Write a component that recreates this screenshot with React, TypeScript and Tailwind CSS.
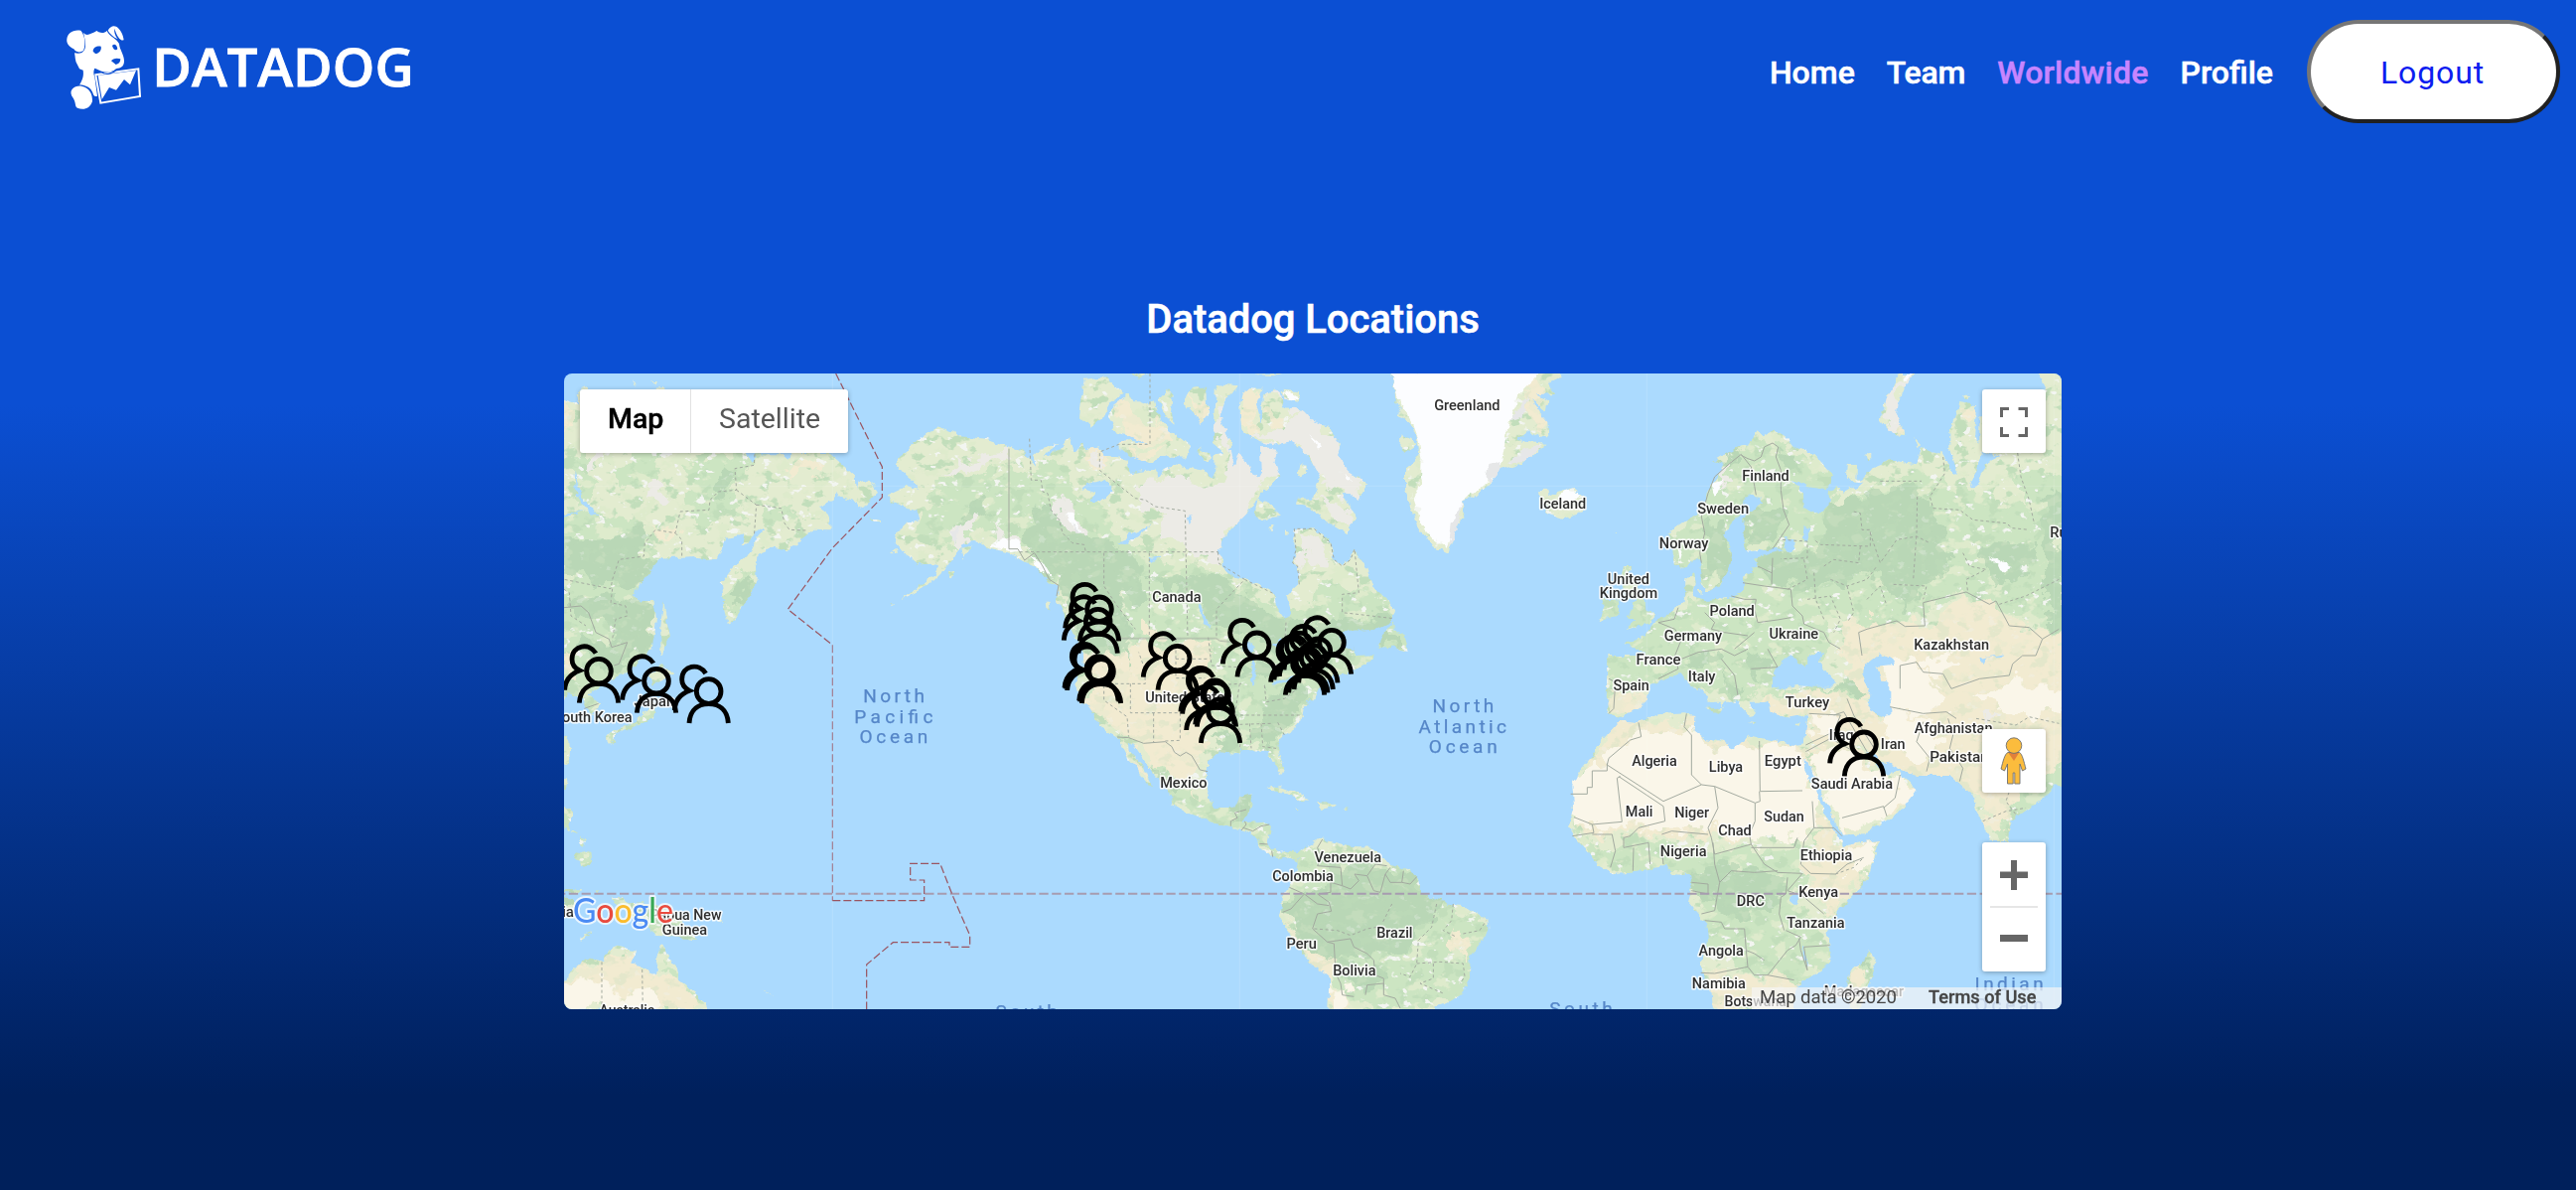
import React from 'react';

type Crop = { x: number; y: number };

const TILES: Record<string, Crop> = {
  A: { x: 560, y: 370 },
  B: { x: 880, y: 370 },
  C: { x: 1240, y: 370 },
  D: { x: 1560, y: 370 },
  E: { x: 560, y: 640 },
  F: { x: 960, y: 640 },
  G: { x: 1260, y: 680 },
  H: { x: 1560, y: 640 },
};

type Shape = [tile: string, points: string];

const poly = (p: string) => 'M' + p + 'Z';

const Tile = ({ t, children }: { t: string; children: React.ReactNode }) => (
  <g transform={`translate(${TILES[t].x} ${TILES[t].y}) scale(0.333333)`}>{children}</g>
);

const LAND: Shape[] = [
  // Siberia and north-east Asia
  ['A', '0,85 24,97 70,112 62,80 75,66 95,60 110,100 400,200 575,258 580,268 590,285 600,262 685,262 700,275 715,258 825,258 870,298 905,330 908,365 920,340 950,342 972,375 955,390 932,430 915,420 900,405 860,392 845,375 838,400 795,420 815,435 825,460 827,490 780,488 745,515 700,553 655,545 615,562 602,590 605,640 590,690 568,715 545,758 520,770 510,730 505,690 500,650 530,610 565,580 590,550 607,515 628,490 605,487 590,515 578,535 563,530 568,505 515,515 485,580 450,582 420,570 385,572 355,572 320,575 275,625 245,665 225,690 260,705 295,705 303,760 298,800 290,850 240,900 190,935 135,960 95,985 130,1010 115,1045 88,1025 80,1000 40,985 20,1010 0,1010'],
  ['A', '325,703 333,760 345,810 328,825 325,868 316,870 316,780'],
  ['A', '950,455 982,462 980,468 952,462'],
  ['A', '230,40 238,56 230,48'], ['A', '292,42 302,42 300,56'], ['A', '302,62 325,60 325,75 302,75'],
  // Japan, Philippines, New Guinea, Australia
  ['E', '315,80 355,115 330,130 290,152 285,125 300,110'],
  ['E', '290,190 302,220 298,245 270,262 240,272 205,290 178,298 175,318 165,330 148,300 165,292 200,280 240,262 258,235 280,220'],
  ['E', '24,300 40,320 42,350 38,380 20,390 20,300'],
  ['E', '24,430 38,430 28,465 20,465'], ['E', '20,520 45,520 45,560 35,590 20,578'],
  ['E', '40,590 65,590 60,600'], ['E', '75,605 90,620 82,640 68,625'],
  ['E', '100,650 103,685 82,697 72,680 48,672 55,655 80,658'],
  ['E', '20,765 80,766 62,776 20,774'], ['E', '118,776 135,765 128,778'],
  ['E', '68,912 110,895 92,908 75,920'], ['E', '20,790 50,795 70,830 20,850'],
  ['E', '170,790 205,788 215,808 260,805 330,822 380,860 428,920 370,912 300,905 280,880 240,860 200,812 175,805'],
  ['E', '495,855 505,868 490,862'], ['E', '625,1068 655,1088 640,1080'],
  ['E', '20,1055 50,1010 100,970 140,988 155,950 185,938 243,950 228,988 270,1008 300,1020 308,965 320,930 338,968 362,1000 370,1035 400,1060 430,1085 460,1130 20,1130'],
  // North America
  ['B', '65,290 78,270 105,250 110,230 150,210 195,178 240,195 255,208 340,215 405,238 440,250 470,275 490,300 480,265 500,245 560,230 525,258 510,275 570,240 590,210 605,255 615,250 630,225 636,250 680,238 695,268 770,278 775,318 850,308 862,332 880,305 905,293 990,310 1030,332 1030,262 1080,252 1090,300 1105,258 1130,295 1145,320 1200,355 1155,400 1145,420 1095,470 1055,515 1040,560 1070,625 1120,640 1165,660 1212,685 1220,730 1245,765 1260,740 1247,690 1285,655 1280,600 1265,590 1275,550 1270,487 1330,487 1380,530 1390,580 1415,600 1440,580 1450,548 1490,610 1505,660 1545,695 1572,730 1565,765 1510,792 1420,795 1405,812 1450,822 1452,870 1512,868 1500,890 1430,922 1385,930 1350,960 1330,1000 700,1000 645,890 600,800 555,705 557,662 520,640 490,600 450,585 410,560 350,545 300,522 265,540 235,580 210,615 180,645 130,675 88,697 100,685 180,630 195,600 165,595 130,590 110,572 90,560 65,530 70,500 100,470 140,462 130,430 90,420 52,405 42,385 100,357 135,370 120,345 95,325'],
  ['B', '52,555 70,552 72,560 55,562'], ['B', '225,620 245,612 235,638 226,630'], ['B', '262,545 290,540 268,578'],
  ['B', '518,708 530,712 535,735 520,725'], ['B', '52,714 62,714 60,720'],
  ['B', '635,35 700,28 755,80 712,108 690,150 655,182 618,145'],
  ['B', '770,80 778,100 800,100 830,112 848,100 862,150 895,190 925,212 958,240 940,272 885,268 832,288 785,272 735,235 765,220 830,232 760,200 718,190 730,162 708,155 722,118'],
  ['B', '862,92 888,64 905,85 900,140 905,170 880,150'],
  ['B', '950,70 968,62 1003,58 1005,110 1018,135 990,172 960,130 935,108'],
  ['B', '1035,48 1100,55 1058,110 1045,150 1080,232 1070,268 1020,225 1030,150'],
  ['B', '985,240 1027,270 1010,286 980,265'], ['B', '770,20 830,20 800,32'],
  ['C', '30,180 25,120 36,80 55,64 92,65 75,110 92,168 95,85 130,65 150,72 155,118 195,120 222,135 245,160 290,180 330,230 318,262 352,312 412,350 380,402 335,370 372,455 350,502 280,460 240,425 195,412 200,395 245,395 270,332 235,270 195,230 180,222 120,235 60,215 35,195'],
  ['C', '155,68 198,72 212,95 205,105 160,95'], ['C', '205,290 227,296 228,322 210,332 200,318'],
  ['C', '80,390 110,410 150,450 125,452 95,465 70,450'], ['C', '108,482 130,475 122,492'], ['C', '160,495 168,500 163,508'],
  ['C', '90,240 138,245 130,290 145,330 108,375 70,350 92,310'],
  ['C', '0,350 60,385 52,402 20,440 15,475 0,475'], ['C', '60,20 150,18 130,25'],
  ['C', '480,775 492,770 500,800 520,810 533,855 505,848 495,842 445,845 462,800'],
  ['F', '300,0 1150,0 1130,70 1085,175 1075,195 1060,215 1055,240 1040,275 985,310 978,340 1000,400 990,425 968,385 950,348 870,345 862,358 805,352 765,385 765,470 790,520 850,518 865,485 905,478 892,540 875,565 940,560 960,572 950,630 985,655 1015,648 1035,660 1040,690 1020,668 985,675 930,645 905,600 830,575 780,560 700,532 660,508 655,470 600,410 572,370 545,328 528,322 530,345 566,385 600,452 590,452 570,430 550,390 530,385 525,360 500,312 450,278 410,215 385,200 370,150 390,100 395,50 370,0'],
  ['F', '945,465 985,453 1040,472 1078,497 1042,496 1010,475'], ['F', '1095,502 1130,502 1152,515 1110,525'],
  ['F', '1028,524 1045,526 1035,529'], ['F', '1178,523 1195,524 1185,529'],
  // Greenland and Iceland
  ['C', '483,10 495,90 492,105 515,118 500,150 540,165 560,210 568,262 550,288 525,300 525,370 545,420 560,470 578,500 600,532 655,560 675,500 700,445 700,400 740,388 782,350 812,310 880,290 950,230 860,222 900,190 935,212 958,210 955,165 925,130 905,95 950,135 955,100 920,82 975,78 960,45 992,30 985,10'],
  ['C', '512,198 560,232 525,255 508,240'],
  ['C', '930,370 955,368 960,390 985,378 1035,362 1070,400 1060,435 1000,458 950,440 955,420 935,405'],
  ['C', '1158,495 1166,495 1162,502'],
  // Europe and Asia
  ['D', '635,190 650,205 680,188 715,210 740,240 800,262 858,325 855,345 835,370 780,360 735,342 768,378 770,420 812,445 845,415 845,370 870,360 890,380 910,368 950,350 910,345 896,330 900,290 930,298 928,335 945,342 980,300 1030,280 1110,292 1125,240 1190,262 1220,320 1235,318 1210,250 1210,190 1240,105 1290,115 1285,200 1310,262 1275,345 1268,362 1290,358 1320,290 1360,270 1300,250 1300,150 1320,140 1480,120 1500,60 1475,15 1560,15 1560,1010 175,1010 175,928 270,932 290,900 290,862 232,830 290,810 320,770 360,745 410,705 412,640 436,620 440,650 432,690 470,702 545,695 585,680 585,632 630,600 618,575 640,568 705,550 680,545 600,560 585,540 590,450 642,410 640,390 598,385 580,440 548,470 530,510 555,560 545,600 510,665 475,677 460,650 452,572 400,610 380,592 362,500 410,465 455,440 480,370 510,330 530,290 495,282 570,238 600,232'],
  ['D', '1060,18 1100,18 1072,70 1055,110 1050,140 1078,205 1035,200 1000,160 1020,90 1040,60'],
  ['D', '1098,212 1122,236 1112,240'], ['D', '955,258 978,260 960,278'], ['D', '1253,85 1272,88 1262,98'],
  ['D', '160,700 205,698 210,740 180,758 155,765 165,730'],
  ['D', '225,600 250,600 240,622 262,628 258,650 290,700 292,735 318,740 308,775 228,792 262,762 232,752 255,730 250,715 265,700 240,690 215,640'],
  ['D', '448,672 462,672 460,688'], ['D', '545,620 552,618 548,632'],
  ['H', '175,115 345,115 390,108 420,140 470,162 520,195 515,218 528,205 545,175 500,145 470,105 510,120 560,165 575,205 602,240 625,235 600,200 598,180 655,172 668,232 720,248 782,236 770,325 735,332 700,322 608,302 590,310 560,340 520,320 470,312 440,290 442,240 405,232 330,238 270,262 215,255 165,310 125,370 90,410 70,450 75,510 60,575 72,605 115,650 150,695 190,718 260,712 350,695 375,718 425,720 432,760 420,805 475,870 480,920 455,1000 490,1070 495,1130 740,1130 745,1060 850,990 850,930 835,900 870,830 960,740 998,618 940,625 890,635 840,550 772,400 770,375 785,385 820,470 885,602 950,598 1050,540 1112,465 1065,425 1060,412 1010,420 960,350 1060,405 1110,420 1210,420 1280,482 1290,530 1330,620 1385,622 1395,560 1480,500 1530,450 1560,460 1560,80 1100,60 600,60 175,60'],
  ['H', '175,120 172,230 215,243 240,238 285,215 300,155 345,130 345,80 175,80'],
  ['H', '470,222 528,215 515,235'], ['H', '410,165 425,165 425,195 412,197'], ['H', '745,268 762,263 755,272'], ['H', '600,262 630,264 615,270'],
  ['H', '965,948 985,985 970,1040 940,1128 905,1128 898,1045 905,1008 945,990'],
  // South America
  ['G', '165,515 215,490 235,500 300,515 360,518 390,545 415,575 475,585 500,605 512,645 515,662 580,680 595,695 650,700 690,728 715,735 718,765 690,810 662,850 660,905 635,965 605,985 560,1000 540,1015 232,1015 235,910 180,870 155,840 85,735 92,705 92,670 115,640 140,590 140,550 110,540 115,530 140,535'],
];

const WATER: Shape[] = [
  ['H', '700,72 730,58 752,68 750,85 775,92 790,60 832,48 815,82 865,140 850,155 800,155 750,150 700,160 672,152 672,130 690,100'],
  ['H', '950,92 1000,52 1045,75 1035,90 990,95 1000,120 1030,155 1030,240 1000,245 960,215 970,180 948,130'],
  ['H', '1300,70 1375,55 1370,62 1325,65 1308,88'], ['H', '730,785 755,780 752,812 732,812'], ['H', '762,915 778,985 782,1005 770,975'],
  ['H', '345,135 395,112 420,145 480,180 470,220 440,232 400,230 330,225 290,240 215,243 260,225 295,200 305,150'],
  ['D', '770,480 790,490 780,528 765,515'], ['D', '712,512 735,520 742,545 720,555 708,540'],
  ['B', '640,355 700,342 725,370 680,405 650,405 670,380 628,365'], ['B', '735,530 765,520 770,490 790,500 840,475 800,510 760,535'],
  ['B', '978,715 990,715 1015,785 1000,775'], ['B', '830,575 870,572 835,588'], ['B', '945,450 965,448 950,475'],
  ['F', '880,20 915,30 905,50 870,45'], ['F', '905,70 915,75 912,150 900,130'], ['F', '960,145 1040,118 1030,128 965,152'],
  ['C', '150,820 165,838 140,850 120,835'], ['C', '325,808 375,812 370,860 345,850'],
  ['A', '55,310 65,350 75,390 125,445 100,438 60,380'], ['A', '24,445 90,430 60,440 24,452'],
  ['F', '865,342 870,350 862,352'],
];

const MID: Shape[] = [
  ['A', '0,440 120,440 250,460 255,520 300,560 330,600 245,680 300,700 290,860 160,960 0,960'],
  ['A', '230,258 330,258 300,350 210,370 180,320'], ['A', '360,280 560,260 600,300 540,350 560,440 430,480 380,420 400,350'],
  ['A', '540,640 600,600 595,690 545,755 515,760 510,680'], ['A', '640,420 720,410 740,460 640,480'], ['A', '60,270 110,270 100,400 60,420'],
  ['E', '0,0 300,0 290,60 200,130 100,220 0,160'], ['E', '150,290 300,190 300,245 170,330'], ['E', '0,760 430,770 430,930 300,900'],
  ['E', '0,500 110,590 110,700 20,700'], ['E', '320,930 375,1030 460,1130 430,1130 360,1050'],
  ['B', '180,350 400,300 560,310 660,400 700,470 830,560 1000,600 1160,690 1560,740 1560,930 1350,1000 780,990 760,690 640,640 560,600 420,540 300,500 200,560 120,530 160,440'],
  ['B', '480,290 570,300 560,340 500,350'], ['B', '500,280 470,400 500,620 700,900 620,820 540,700'],
  ['C', '330,640 480,700 520,860 380,870 180,790 260,700'], ['C', '140,760 560,760 560,920 200,980 0,1000 0,720'],
  ['F', '765,0 1150,0 1060,240 990,310 1000,430 940,345 800,360 780,200'], ['F', '450,0 600,20 560,140 500,120'],
  ['F', '600,370 720,480 790,520 910,480 960,570 1040,680 900,620 660,510'], ['F', '940,450 1160,520 1000,490'], ['F', '400,150 470,220 500,290 420,210'],
  ['G', '60,490 500,580 520,660 720,740 700,820 640,980 540,1010 330,1010 230,860 110,680 130,560'],
  ['D', '640,220 860,300 840,430 1100,310 1270,360 1460,440 1560,440 1560,800 1420,760 1240,680 1100,760 940,790 860,760 820,900 640,1000 280,940 240,830 430,690 560,690 380,600 380,500 520,300'],
  ['D', '150,690 240,600 320,740 300,800 150,770'], ['D', '1380,300 1560,330 1560,520 1480,480'],
  ['H', '180,60 480,80 620,200 560,180 450,120 290,120 210,200 170,220'], ['H', '680,160 960,160 940,200 760,190'],
  ['H', '60,600 200,640 300,610 420,650 600,640 760,640 830,590 860,700 720,760 850,930 850,990 760,1060 600,1010 480,930 420,720 180,720'],
  ['H', '1440,380 1560,380 1560,480 1400,560 1380,620 1340,600 1420,480'], ['H', '970,950 990,990 960,1070 950,1000'],
];

const DARK: Shape[] = [
  ['A', '0,530 150,520 260,480 250,560 320,590 250,640 120,650 0,600'], ['A', '170,690 300,700 290,850 200,830 150,770 60,760 40,700'],
  ['A', '560,640 600,640 560,720 530,740 540,660'], ['A', '500,300 540,330 500,420 480,380'],
  ['E', '60,20 250,0 220,110 130,100'], ['E', '0,760 60,790 20,840'], ['E', '170,790 330,830 420,920 330,890'], ['E', '160,300 290,230 200,290'],
  ['B', '260,430 340,400 360,450 280,480'], ['B', '500,430 560,420 640,520 780,560 830,680 790,700 740,690 780,800 680,900 560,680 500,580 440,500'],
  ['B', '830,640 1020,620 1160,720 1340,800 1380,920 1240,900 1140,780 1020,800 1000,700 870,670'],
  ['B', '1130,880 1200,900 1190,960 1100,920'],
  ['C', '0,700 70,730 100,800 0,800'], ['C', '190,790 380,760 480,740 480,800 300,900 180,860'], ['C', '460,800 520,820 530,850 450,840'],
  ['F', '960,180 1060,150 1050,230 960,330 880,320 930,240'], ['F', '780,300 840,290 830,350 790,340'], ['F', '480,0 540,20 530,80'],
  ['F', '860,480 900,480 880,550 840,560'], ['F', '600,380 650,440 700,470 690,490 620,430'],
  ['G', '240,580 490,590 510,660 600,690 540,740 480,830 360,850 250,860 170,830 110,720 130,660 230,640'],
  ['G', '250,860 400,900 400,940 330,960 280,900'],
  ['D', '590,420 720,420 720,470 680,540 590,540'], ['D', '480,450 530,460 550,590 510,660 470,620'],
  ['D', '830,410 1100,360 1200,500 1210,580 1180,650 1110,660 1080,750 1060,700 990,620 850,660 700,650 690,560 820,540'],
  ['D', '1280,530 1460,540 1440,640 1340,630'], ['D', '1480,400 1560,380 1560,780 1500,780 1500,560'], ['D', '620,570 700,550 760,600 720,680 640,620'],
  ['D', '400,880 500,850 520,880 440,900'], ['D', '600,860 660,880 640,960 590,900'],
  ['H', '500,110 580,160 560,190'], ['H', '700,160 860,160 900,130 960,180 870,165'],
  ['H', '430,700 520,700 620,710 720,730 700,810 580,860 500,830 430,790'], ['H', '970,970 985,985 960,1060'],
  ['D', '540,250 580,240 560,300 510,300'], ['D', '690,260 740,260 750,320 700,310'],
];

const TAN: Shape[] = [
  ['A', '730,290 820,290 790,330 700,330'], ['A', '0,120 60,120 50,200 0,180'], ['A', '290,480 360,500 340,530 300,510'],
  ['A', '24,860 60,860 50,960 24,960'],
  ['B', '740,110 880,180 900,230 830,240 740,210'], ['B', '940,80 1010,120 990,170'], ['B', '740,240 870,260 820,285'], ['B', '1110,80 1180,60 1150,170 1110,160'],
  ['B', '640,240 720,280 690,310 640,280'], ['B', '680,800 760,900 1010,880 1010,1000 690,1000'], ['B', '810,770 870,770 870,830 810,820'],
  ['C', '30,70 90,65 80,190 40,200'], ['C', '110,120 160,140 150,180 110,160'], ['C', '300,290 340,300 330,330 300,320'], ['C', '900,20 940,50 950,200 920,200 880,80'],
  ['F', '400,60 780,20 770,200 740,380 700,470 760,500 700,460 600,380 520,310 440,250 410,160'], ['F', '500,310 600,450 560,420'],
  ['E', '20,1050 150,970 230,960 300,1020 360,1040 440,1130 20,1130'],
  ['G', '80,710 180,820 250,860 250,1010 230,1010 160,850'], ['G', '600,780 640,760 650,850 600,840'], ['G', '260,1010 290,940 310,1010'],
  ['D', '880,790 940,760 1140,780 1240,690 1340,710 1420,780 1560,790 1560,1010 960,1010 900,960'], ['D', '1230,110 1290,110 1280,170 1240,160'], ['D', '1010,140 1060,140 1060,200'],
  ['H', '180,160 290,180 270,230 200,230'], ['H', '640,180 800,170 930,180 1020,250 1560,150 1560,400 1290,480 1060,410 960,350 780,330 780,240 650,230'],
  ['H', '200,260 440,240 440,300 600,310 780,340 830,540 890,630 1000,610 900,800 840,850 760,700 820,590 600,620 80,590 70,450'],
  ['H', '780,340 900,600 1060,540 1110,460 1000,410 900,330'], ['H', '460,1010 620,1030 740,1040 740,1130 490,1130'], ['H', '900,1010 960,960 930,1130'],
  ['H', '1290,470 1420,440 1400,560 1350,600'], ['H', '1150,0 1560,0 1560,300 1100,320 960,100'],
];

const SAND: Shape[] = [
  ['H', '60,470 100,400 190,340 280,300 420,270 470,330 560,350 640,320 770,350 830,540 800,590 620,620 480,590 300,590 70,570'],
  ['H', '790,350 880,330 950,400 1060,430 1100,470 1040,540 950,590 890,590 840,490'], ['H', '1050,90 1110,80 1200,200 1180,240 1040,230 1030,150'],
  ['H', '1290,190 1400,140 1560,150 1560,220 1400,240'], ['H', '900,640 990,620 960,720 900,720'], ['H', '790,240 860,240 850,300 790,310'], ['H', '1010,230 1100,240 1180,300 1140,380 1020,340'],
  ['D', '1010,910 1110,880 1180,960 1150,1000 1040,1000'], ['D', '1130,890 1200,860 1240,900 1160,930'], ['E', '24,1060 80,1030 150,1050 180,1080 290,1060 320,1130 24,1130'],
  ['G', '240,920 290,930 300,1010 235,1010'], ['F', '530,370 590,450 560,410'],
];

const GREY: Shape[] = [
  ['B', '800,330 1040,340 1080,250 1200,320 1150,400 1050,520 1030,580 960,560 860,500 870,440 790,390'], ['B', '1030,60 1090,250 1040,240'],
  ['B', '640,260 700,280 690,310'], ['B', '260,280 405,250 400,275 240,320 190,340'], ['B', '225,490 290,450 330,460 250,530'],
  ['B', '530,400 600,420 640,510 600,500'], ['B', '360,480 450,520 430,560 390,540'], ['A', '290,350 350,380 320,420 280,390'],
  ['A', '110,258 140,260 135,310 115,300'],
  ['C', '40,200 160,180 240,130 340,250 410,350 380,400 300,380 230,260 190,230'], ['C', '120,70 240,140 180,150'], ['C', '260,380 370,430 340,490'],
  ['C', '60,240 140,240 130,330 60,340'], ['C', '190,490 290,520 300,580 200,570'], ['C', '0,250 50,250 50,420 0,470'],
  ['D', '1020,90 1100,18 1060,100 1040,200 1010,150'], ['D', '480,380 560,270 540,330 500,370'], ['H', '1300,235 1370,250 1340,265'], ['H', '580,140 610,135 605,160'],
];

const SNOW: Shape[] = [
  ['C', '483,10 498,90 520,120 545,160 565,215 575,280 572,350 550,400 545,380 565,440 575,480 610,520 650,545 690,440 700,400 770,350 815,290 835,180 870,80 940,10'],
  ['B', '390,515 430,515 450,550 410,555 350,540'], ['B', '580,440 600,440 630,505 600,480'], ['B', '470,570 510,590 540,640 500,610'],
  ['C', '235,205 270,235 260,245'], ['C', '160,70 210,95 180,100'], ['C', '340,320 370,345 350,340'], ['C', '1010,370 1060,375 1020,420 980,395'],
  ['D', '490,350 530,340 500,390'], ['D', '390,540 405,550 395,590'], ['D', '1070,18 1095,18 1070,45'], ['D', '1330,570 1400,600 1370,620'],
];

const SHADE: Shape[] = [
  ['C', '690,430 700,400 680,500 655,545 665,470'], ['C', '780,290 810,285 815,320 780,350 770,330'], ['C', '830,290 880,250 940,230 890,285'], ['C', '840,160 900,80 880,150'],
  ['B', '230,500 260,480 245,530'], ['B', '600,470 625,500 610,500'],
];

const layers: [string, Shape[]][] = [
  ['#cce5c2', MID],
  ['#f2ebd1', TAN],
  ['#b9d7b6', DARK],
  ['#faf6e9', SAND],
  ['#ecebe6', GREY],
  ['#fcfdff', SNOW],
  ['#e6e7e8', SHADE],
];

const BORDERS: Shape[] = [
  ['B', '408,245 408,548 435,548 455,582 485,560 510,600 530,640 558,658 552,690'], ['B', '735,818 1035,818 1045,825 1075,828 1115,850 1180,880'],
  ['F', '495,306 530,308 575,325 640,320 660,335 668,352 685,363 703,352 720,362 745,405 768,410'],
  ['F', '885,525 850,535 858,550 838,560 838,575'], ['F', '870,588 885,570 880,560'], ['F', '875,580 905,590 930,575 955,570'], ['F', '925,628 950,630'], ['F', '962,650 965,668'],
  ['G', '215,495 200,520 210,550 200,575 270,580 275,635 240,625 240,655 200,660 235,685 242,712 200,720 185,765 230,805 250,810 255,900 270,930 275,965 310,970'],
  ['G', '115,640 160,660 120,705 95,715'], ['G', '160,660 200,690 235,695'], ['G', '275,635 300,645 325,620 312,600 350,605 375,570 410,575'], ['G', '350,605 370,650 390,655 405,600'], ['G', '420,580 405,600 420,625 455,625 460,590'], ['G', '455,625 480,630 500,608'],
  ['G', '230,805 300,795 310,820 350,840 370,860 375,905 400,915 400,940'], ['G', '345,965 350,935 400,930 400,965 435,975 450,1005'],
  ['D', '580,265 600,275 620,282 640,270 650,240 675,228 692,240 685,270'], ['D', '460,590 455,560 470,500 460,450 480,380 500,330 545,290 580,262 610,300 625,385'],
  ['D', '685,270 700,310 700,370 708,430 725,475 675,548'], ['D', '675,575 672,655'], ['D', '585,650 650,660 690,665 730,670 735,720 765,750 770,775 830,800 845,830'],
  ['D', '630,600 672,620'], ['D', '550,690 590,700 625,700 620,730 630,770 690,762 730,755'], ['D', '390,725 378,760 330,770 380,790 400,820 380,870 390,910 330,940'],
  ['D', '470,740 500,770 490,790 530,800 600,810'], ['D', '400,880 450,860 520,850 560,870 600,850'], ['D', '520,880 560,930 570,990'], ['D', '610,910 690,905 660,850'], ['D', '560,850 620,800'], ['D', '845,830 880,850'],
  ['D', '945,870 935,800 960,790 1050,765 1075,782 1135,780 1130,710 1260,678 1330,715 1350,705 1390,780 1450,785 1490,820 1540,790'],
  ['D', '1060,970 1060,900 1110,890 1130,920 1190,925 1215,970 1300,940 1390,930 1400,895'], ['D', '1490,820 1470,870 1430,870 1400,895'],
  ['H', '180,130 200,140 195,220 180,235'], ['H', '270,262 278,305 245,315 180,370 175,390 345,500 460,450 500,455 622,505'], ['H', '65,478 115,478 115,458 130,458 130,408 175,408 175,385'],
  ['H', '215,425 205,430 220,562 130,570 75,548'], ['H', '210,425 345,515 350,560 270,580 245,605 225,610 225,640'], ['H', '415,235 408,275 430,300 430,420 460,450'],
  ['H', '635,318 637,470 765,468'], ['H', '635,470 637,500 622,505 622,560 605,600 610,630 500,660 490,610 480,580 510,520 500,455'], ['H', '340,600 370,590 480,600'], ['H', '340,640 345,690'],
  ['H', '225,640 300,625 305,690'], ['H', '255,640 253,710'], ['H', '130,570 135,595 70,605'], ['H', '130,600 190,600 200,650 185,700'], ['H', '495,625 500,690 515,745 550,710 620,715 690,710'],
  ['H', '610,630 650,690 690,715 765,718'], ['H', '610,640 740,640 750,610'], ['H', '800,580 770,620 760,690 790,718 865,720 900,690 950,670'], ['H', '795,500 800,580 860,580 885,605'],
  ['H', '765,718 720,770 765,785 830,840'], ['H', '720,730 715,780 700,790 695,840 710,890'], ['H', '430,745 480,750 480,780 430,770'], ['H', '515,745 500,830 460,840'], ['H', '470,860 520,865 530,885 590,885 595,950 600,1000 500,1020 458,1018'],
  ['H', '600,1000 620,1025 660,1025 720,950 745,935 760,910 715,890'], ['H', '595,950 620,960 650,980'], ['H', '755,915 760,950 780,1010 770,940 848,935'], ['H', '660,1025 740,1040'],
  ['H', '785,235 880,240 860,290 775,330'], ['H', '860,240 890,230 960,350'], ['H', '775,350 850,310 940,360'], ['H', '1010,520 1045,490 1060,420'], ['H', '885,550 940,535 1010,515 1020,545'],
  ['H', '1030,215 1130,235 1200,230 1230,250'], ['H', '1140,410 1150,370 1110,320 1130,260'], ['H', '900,190 920,240 950,290 985,345'], ['H', '1205,250 1220,300 1210,340 1250,400 1240,440'],
  ['A', '24,725 75,720 98,740 120,800 160,820 168,845 215,830 190,895 175,900'], ['E', '85,220 128,205'],
];

const STATES: Shape[] = [
  ['A', '600,262 598,295 540,305 545,370 490,375 465,400 462,430 375,435 360,500 300,490 268,530 265,570 190,580 170,640 165,668 24,640'], ['A', '545,370 605,415 598,510'], ['A', '605,415 680,425 690,470 705,490 757,492'],
  ['A', '170,668 165,710 210,720 215,750 180,760 170,820'], ['A', '360,500 380,520 380,570'], ['A', '24,670 40,680 45,750 90,780'],
  ['B', '470,215 475,340 505,340 510,375 525,380 535,430 560,460 570,500 600,530 635,535 640,557'], ['B', '440,557 1040,557'], ['B', '834,18 834,232 740,232 682,255 682,310 790,395 820,400 850,420 940,433 948,818'],
  ['B', '695,560 695,660 735,720 790,790'], ['B', '832,560 832,818'], ['B', '1040,557 1040,590 1120,640 1035,730 1035,818'], ['B', '1120,640 1212,685'],
  ['F', '455,145 580,145 578,100 560,50'], ['F', '455,150 455,195 525,245 530,305'], ['F', '535,145 535,233 685,233'], ['F', '605,233 605,322'], ['F', '685,233 685,316 640,318'], ['F', '672,10 672,128 760,128'], ['F', '672,70 775,70'],
  ['F', '770,5 780,90 860,95'], ['F', '850,240 1055,240'], ['F', '865,145 850,240 870,300 865,340'], ['F', '895,265 900,340'], ['F', '930,265 935,335 975,340'], ['F', '780,150 870,145'], ['F', '940,150 945,200 1000,190 1040,160'], ['F', '980,262 1000,300'], ['F', '865,268 960,265'],
  ['C', '205,655 200,600 185,590 195,550 190,487 250,487 300,530 310,580 335,600 360,580 372,548 385,680 335,685 335,740 380,745 490,758'], ['C', '165,770 160,850'],
  ['E', '138,985 138,1130'], ['E', '260,1008 262,1130'],
  ['G', '425,690 395,750'], ['G', '190,765 260,770 300,785 350,765 380,760'], ['G', '560,690 545,760 505,800 500,870 480,910 450,900'], ['G', '500,870 570,865 640,870 645,910 630,930'], ['G', '610,690 605,740 580,770 620,790'], ['G', '550,870 550,915 510,930 580,960'], ['G', '640,780 690,770 710,740'],
  ['D', '1190,270 1195,320 1150,390 1160,425 1240,430 1280,460 1380,470 1400,485 1450,490'], ['D', '1000,343 1125,343'], ['D', '1415,258 1425,330 1450,400 1465,470'], ['D', '1112,390 1110,500 1100,640'],
  ['D', '920,435 940,440 945,490 970,490 970,540 820,535 800,520'], ['D', '705,520 780,525 780,575 700,578'], ['D', '970,500 1000,590 1050,520 1110,510 1150,530'], ['D', '940,540 935,590 860,580 830,600'], ['D', '720,670 780,640 770,580'], ['D', '1040,655 1140,660 1130,700'],
  ['D', '850,640 900,660 960,640 990,600'], ['D', '780,700 850,690 880,760 860,800'], ['D', '960,700 1000,660 1020,720'], ['D', '1250,560 1270,600 1320,610 1260,640 1265,680'], ['D', '1360,715 1440,690 1540,640'], ['D', '900,660 920,740 900,770'], ['D', '800,620 805,700 830,760'],
  ['H', '865,720 920,700 950,670'], ['H', '1290,250 1410,270 1450,245 1540,265'], ['H', '1310,560 1380,530 1440,520'], ['H', '1400,440 1380,500 1410,540'],
];

type Label = [tile: string, text: string, x0: number, x1: number, base: number];

const LABELS: Label[] = [
  ['B', 'Canada', 842, 987, 709],
  ['C', 'Greenland', 614, 810, 130],
  ['C', 'Iceland', 932, 1070, 425],
  ['D', 'Finland', 584, 724, 342],
  ['D', 'Sweden', 449, 602, 442],
  ['D', 'Norway', 334, 480, 546],
  ['D', 'United', 178, 301, 653],
  ['D', 'Kingdom', 154, 326, 697],
  ['D', 'Poland', 486, 619, 750],
  ['D', 'Germany', 349, 521, 825],
  ['D', 'Ukraine', 666, 812, 820],
  ['D', 'France', 264, 396, 897],
  ['D', 'Kazakhstan', 1103, 1328, 851],
  ['D', 'Russia', 1514, 1644, 512],
  ['H', 'Spain', 195, 301, 166],
  ['H', 'Italy', 421, 501, 137],
  ['H', 'Turkey', 715, 845, 216],
  ['H', 'Iraq', 847, 918, 316],
  ['H', 'Iran', 1003, 1074, 341],
  ['H', 'Afghanistan', 1105, 1338, 295],
  ['H', 'Pakistan', 1151, 1327, 382],
  ['H', 'Algeria', 251, 385, 394],
  ['H', 'Libya', 484, 584, 411],
  ['H', 'Egypt', 652, 760, 392],
  ['H', 'Saudi Arabia', 793, 1037, 463],
  ['H', 'Mali', 232, 312, 547],
  ['H', 'Niger', 380, 482, 550],
  ['H', 'Chad', 512, 610, 602],
  ['H', 'Sudan', 650, 769, 560],
  ['H', 'Nigeria', 337, 474, 666],
  ['H', 'Ethiopia', 760, 914, 677],
  ['H', 'DRC', 568, 649, 817],
  ['H', 'Kenya', 755, 872, 788],
  ['H', 'Tanzania', 719, 891, 881],
  ['H', 'Angola', 453, 586, 965],
  ['H', 'Namibia', 433, 592, 1064],
  ['H', 'Botswana', 531, 715, 1120],
  ['H', 'Madagascar', 832, 1070, 1090],
  ['E', 'Japan', 237, 356, 212],
  ['E', 'South Korea', -7, 228, 262],
  ['E', 'Indonesia', -146, 53, 849],
  ['E', 'Papua New', 285, 498, 859],
  ['E', 'Guinea', 322, 455, 903],
  ['E', 'Australia', 132, 297, 1146],
  ['F', 'United States', 581, 840, 201],
  ['F', 'Mexico', 626, 765, 459],
  ['G', 'Venezuela', 192, 392, 563],
  ['G', 'Colombia', 65, 247, 622],
  ['G', 'Peru', 108, 196, 826],
  ['G', 'Brazil', 380, 486, 793],
  ['G', 'Bolivia', 248, 375, 907],
];

const OCEANS: Label[] = [
  ['E', 'North', 932, 1107, 200],
  ['E', 'Pacific', 905, 1132, 263],
  ['E', 'Ocean', 921, 1117, 325],
  ['G', 'North', 552, 727, 110],
  ['G', 'Atlantic', 510, 765, 173],
  ['G', 'Ocean', 541, 737, 235],
  ['G', 'South', 905, 1085, 1026],
  ['F', 'South', 132, 308, 1156],
  ['H', 'Indian', 1290, 1487, 1072],
  ['H', 'Ocean', 1290, 1487, 1135],
];

type Pin = [tile: string, x: number, y: number];

const PINS: Pin[] = [
  ['E', 129, 107], ['E', 303, 137], ['E', 461, 168],
  ['B', 681, 730], ['B', 677, 767],
  ['B', 679, 910], ['B', 682, 913], ['B', 687, 918],
  ['B', 917, 878], ['B', 1157, 838],
  ['F', 790, 172], ['F', 795, 179], ['F', 807, 228],
  ['C', 303, 830], ['C', 262, 856], ['C', 248, 876], ['C', 232, 886], ['C', 222, 893],
  ['H', 951, 328],
];

const groupByTile = (shapes: Shape[], render: (p: string, i: number) => React.ReactNode) =>
  shapes.map(([t, p], i) => (
    <Tile t={t} key={i}>
      {render(p, i)}
    </Tile>
  ));

function Terrain() {
  return (
    <svg className="block h-full w-full" viewBox="568 376 1508 640">
      <defs>
        <filter id="coast" colorInterpolationFilters="sRGB" filterUnits="userSpaceOnUse" x="560" y="370" width="1530" height="660">
          <feTurbulence type="fractalNoise" baseFrequency="0.12" numOctaves="3" seed="4" result="n" />
          <feDisplacementMap in="SourceGraphic" in2="n" scale="7" xChannelSelector="R" yChannelSelector="G" />
        </filter>
        <filter id="patch" colorInterpolationFilters="sRGB" filterUnits="userSpaceOnUse" x="560" y="370" width="1530" height="660">
          <feTurbulence type="fractalNoise" baseFrequency="0.05" numOctaves="4" seed="9" result="n" />
          <feDisplacementMap in="SourceGraphic" in2="n" scale="34" xChannelSelector="R" yChannelSelector="G" />
        </filter>
        <filter id="glints" colorInterpolationFilters="sRGB" filterUnits="userSpaceOnUse" x="560" y="370" width="1530" height="660">
          <feTurbulence type="fractalNoise" baseFrequency="0.09 0.13" numOctaves="3" seed="21" />
          <feColorMatrix type="matrix" values="0 0 0 0 0.95  0 0 0 0 0.96  0 0 0 0 0.94  14 0 0 0 -9.3" />
        </filter>
        <filter id="greens" colorInterpolationFilters="sRGB" filterUnits="userSpaceOnUse" x="560" y="370" width="1530" height="660">
          <feTurbulence type="fractalNoise" baseFrequency="0.06 0.08" numOctaves="4" seed="33" />
          <feColorMatrix type="matrix" values="0 0 0 0 0.76  0 0 0 0 0.87  0 0 0 0 0.735  0 12 0 0 -6.9" />
        </filter>
        <filter id="limes" colorInterpolationFilters="sRGB" filterUnits="userSpaceOnUse" x="560" y="370" width="1530" height="660">
          <feTurbulence type="fractalNoise" baseFrequency="0.05 0.07" numOctaves="4" seed="57" />
          <feColorMatrix type="matrix" values="0 0 0 0 0.87  0 0 0 0 0.92  0 0 0 0 0.80  0 12 0 0 -7.1" />
        </filter>
        <mask id="land" maskUnits="userSpaceOnUse" x="560" y="370" width="1530" height="660">
          <g filter="url(#coast)">
            <g fill="#fff">{groupByTile(LAND, (p) => <path d={poly(p)} />)}</g>
            <g fill="#000">{groupByTile(WATER, (p) => <path d={poly(p)} />)}</g>
          </g>
        </mask>
        <mask id="vegetation" maskUnits="userSpaceOnUse" x="560" y="370" width="1530" height="660">
          <g filter="url(#patch)">
            <rect x="560" y="370" width="1530" height="660" fill="#fff" />
            <g fill="#000">
              {groupByTile([...SAND, ...GREY, ...SNOW], (p) => <path d={poly(p)} />)}
            </g>
            <g fill="#484848">{groupByTile([...TAN, ...DARK], (p) => <path d={poly(p)} />)}</g>
            <g fill="#000">{groupByTile([...SAND, ...SNOW], (p) => <path d={poly(p)} />)}</g>
          </g>
        </mask>
      </defs>

      <rect x="560" y="370" width="1530" height="660" fill="#abdafe" />
      <g mask="url(#land)">
        <rect x="560" y="370" width="1530" height="660" fill="#e3ecd0" />
        <g filter="url(#patch)">
          {layers.slice(0, 3).map(([fill, shapes]) => (
            <g key={fill} fill={fill}>
              {groupByTile(shapes, (p) => <path d={poly(p)} />)}
            </g>
          ))}
        </g>
        <g mask="url(#vegetation)">
          <rect x="560" y="370" width="1530" height="660" filter="url(#greens)" />
          <rect x="560" y="370" width="1530" height="660" filter="url(#limes)" />
        </g>
        <g filter="url(#patch)">
          {layers.slice(3, 5).map(([fill, shapes]) => (
            <g key={fill} fill={fill}>
              {groupByTile(shapes, (p) => <path d={poly(p)} />)}
            </g>
          ))}
        </g>
        <g filter="url(#coast)">
          {layers.slice(5).map(([fill, shapes]) => (
            <g key={fill} fill={fill}>
              {groupByTile(shapes, (p) => <path d={poly(p)} />)}
            </g>
          ))}
        </g>
        <g mask="url(#vegetation)">
          <rect x="560" y="370" width="1530" height="660" filter="url(#glints)" />
        </g>
      </g>

      <g fill="none" stroke="#a3aaa0" strokeWidth="3">
        {groupByTile(BORDERS, (p) => <path d={'M' + p} />)}
      </g>
      <g fill="none" stroke="#a3aaa0" strokeWidth="3" strokeDasharray="9 8">
        {groupByTile(STATES, (p) => <path d={'M' + p} />)}
      </g>

      <path d="M838.3 370V1020M1248.3 370V1020M1658.3 370V1020M2068.3 370V1020M560 489.3H2080" stroke="#fff" strokeOpacity="0.14" />
      <path d="M560 899.7H2080" stroke="#a79cb0" strokeWidth="2" strokeDasharray="9.3 3.5" />
      <g fill="none" stroke="#9a5460" strokeWidth="3.6" strokeDasharray="24 9">
        <Tile t="A"><path d="M845,18 985,300 985,392 835,545 700,730 835,838" /></Tile>
        <Tile t="E">
          <path d="M835,28 835,800" stroke="#a27e90" />
          <path d="M835,800 1112,800 1112,738 1070,738 1070,688 1160,688 1200,790 1250,905 1250,940 1188,940 1188,926 1018,926 938,993 938,1135" />
        </Tile>
      </g>

      <g fontFamily="Roboto, sans-serif" fontSize="19" fill="#5586c8" stroke="#5586c8" strokeWidth="0.25">
        {OCEANS.map(([t, s, x0, x1, b]) => (
          <text key={t + s + b} x={TILES[t].x + x0 / 3 - 1.5} y={TILES[t].y + b / 3} textLength={(x1 - x0) / 3 + 3.5}>{s}</text>
        ))}
      </g>
      <g fontFamily="Roboto, sans-serif" fontSize="15.2" fontWeight="500" fill="#2f2f2f" stroke="#fff" strokeOpacity="0.85" strokeWidth="3.2" strokeLinejoin="round" style={{ paintOrder: 'stroke' }}>
        {LABELS.map(([t, s, x0, x1, b]) => (
          <text key={s} x={TILES[t].x + x0 / 3 - 0.5} y={TILES[t].y + b / 3} textLength={(x1 - x0) / 3 + 1} lengthAdjust="spacingAndGlyphs">{s}</text>
        ))}
      </g>

      <g fill="none" stroke="#000" strokeWidth="14.5">
        {PINS.map(([t, x, y], i) => (
          <Tile t={t} key={i}>
            <g transform={`translate(${x} ${y})`}>
              <circle r="37" />
              <path d="M-59,96 C-56,52 -28,38 0,38 C28,38 56,52 59,96" />
              <path d="M-9,-54 C-28,-87 -81,-80 -81,-36 C-81,-20 -74,-10 -58,-2 C-84,8 -102,28 -103,57" />
            </g>
          </Tile>
        ))}
      </g>

      <text x="577" y="929" fontFamily="Lato, sans-serif" fontSize="34" fontWeight="500" textLength="101" lengthAdjust="spacingAndGlyphs" stroke="#fff" strokeOpacity="0.75" strokeWidth="4" strokeLinejoin="round" style={{ paintOrder: 'stroke' }}>
        <tspan fill="#4b8bf4">G</tspan><tspan fill="#e94b3f">o</tspan><tspan fill="#fbbc2e">o</tspan><tspan fill="#4b8bf4">g</tspan><tspan fill="#38a854">l</tspan><tspan fill="#e94b3f">e</tspan>
      </text>
    </svg>
  );
}

function Logo() {
  return (
    <svg className="h-[130px] w-[420px]" viewBox="0 0 1260 390" fill="#fff">
      <path d="M82,118 C84,100 100,88 124,92 C137,108 140,132 132,153 C122,160 108,158 103,148 C90,142 80,132 82,118Z" />
      <path d="M132,98 C142,112 156,100 166,97 L172,93 L178,97 C188,101 196,100 203,93 C212,112 232,116 240,132 C241,150 256,166 255,186 C254,202 244,206 232,207 C222,218 202,219 192,217 C182,214 174,208 166,206 C162,214 162,224 166,232 L174,290 C166,294 162,288 160,280 C154,264 140,258 120,256 C128,244 134,230 131,212 L120,208 L114,196 C106,184 108,172 105,160 C132,166 142,150 137,122Z" />
      <path d="M206,92 C212,80 222,76 231,80 C244,88 252,104 254,121 C244,124 234,112 226,86 C224,98 228,108 236,118 C222,112 212,102 206,92Z" />
      <path d="M97,290 C88,272 104,258 126,260 C150,264 160,284 159,306 C152,328 132,334 114,326 C104,320 112,308 97,290Z" />
      <path d="M169,226 L298,208 L303,291 L184,311Z" fill="none" stroke="#fff" strokeWidth="6" />
      <path d="M176,228 L291,213 L273,256 L255,240 L231,272 L210,264 L188,300Z" />
      <path d="M188,219 C200,226 220,224 232,210" fill="none" stroke="#0b4fd3" strokeWidth="4" />
      <g fill="#0b4fd3">
        <path d="M161,155 C161,144 172,138 185,140 C188,152 178,162 168,162Z" />
        <path d="M219,138 C224,130 234,134 235,148 C230,154 222,150 219,138Z" />
        <path d="M216,184 C220,176 234,174 244,178 C244,188 238,194 230,195Z" />
      </g>
      <text x="340" y="260" fontFamily="'Open Sans', sans-serif" fontWeight="600" fontSize="159" textLength="790" lengthAdjust="spacingAndGlyphs" stroke="#fff" strokeWidth="2.5">DATADOG</text>
    </svg>
  );
}

function Corner({ d }: { d: string }) {
  return <path d={d} fill="none" stroke="#666" strokeWidth="3" />;
}

function MapControls() {
  return (
    <>
      <div className="absolute left-4 top-4 flex h-16 rounded-[3px] bg-white font-[Roboto,sans-serif] text-[28.5px] leading-[60px] shadow-[0_1px_5px_rgba(0,0,0,0.3)]">
        <div className="w-28 border-r border-[#e2e2e2] pl-7 font-medium text-black [-webkit-text-stroke:0.4px_#000]">Map</div>
        <div className="w-[158px] pl-7 text-[#565656]">Satellite</div>
      </div>

      <div className="absolute right-4 top-4 flex h-16 w-16 items-center justify-center rounded-[3px] bg-white shadow-[0_1px_5px_rgba(0,0,0,0.3)]">
        <svg className="mt-0.5 h-[30px] w-7" viewBox="0 0 28 30">
          <Corner d="M1.5 10V1.5H9" />
          <Corner d="M18.5 1.5H26.5V10" />
          <Corner d="M26.5 20V28.5H18.5" />
          <Corner d="M9 28.5H1.5V20" />
        </svg>
      </div>

      <div className="absolute right-4 top-[358px] flex h-16 w-16 items-center justify-center rounded-[3px] bg-white shadow-[0_1px_5px_rgba(0,0,0,0.3)]">
        <svg className="h-12 w-7" viewBox="0 0 28 48" stroke="#6e6e6e" strokeWidth="0.9">
          <path d="M8 15.5 H19.5 C22.5 17 24 25 26 32 L22.5 34 L20 27 V47 H14.8 V36 H13.2 V47 H7.5 V27 L4.5 34 L1 32 C3 25 4.5 17 8 15.5Z" fill="#fbbc3d" />
          <path d="M8.5 16 H19 L14 24Z" fill="#e1803a" stroke="none" />
          <circle cx="14" cy="8.6" r="7.8" fill="#fbbc3d" />
        </svg>
      </div>

      <div className="absolute right-4 top-[472px] flex h-[130px] w-16 flex-col items-center rounded-[3px] bg-white shadow-[0_1px_5px_rgba(0,0,0,0.3)]">
        <div className="flex h-16 w-full items-center justify-center pt-0.5">
          <svg className="h-[30px] w-7" viewBox="0 0 28 30">
            <path d="M11 0H17V11.5H28V18H17V30H11V18H0V11.5H11Z" fill="#666" />
          </svg>
        </div>
        <div className="h-0.5 w-12 bg-[#e6e6e6]" />
        <div className="flex h-16 w-full items-center justify-center pb-1">
          <div className="h-[7px] w-7 bg-[#666]" />
        </div>
      </div>

      <div className="absolute bottom-0 right-0 flex h-[22px] w-[312px] items-center bg-[#f5f5f5]/70 pl-2 font-[Roboto,sans-serif] text-[18.6px] leading-[22px] text-[#444]">
        <span className="w-[170px] whitespace-nowrap pb-0.5 tracking-[-0.1px]">Map data ©2020</span>
        <span className="whitespace-nowrap pb-0.5 text-[18.2px] font-medium [-webkit-text-stroke:0.3px_#444]">Terms of Use</span>
      </div>
    </>
  );
}

export default function App() {
  return (
    <div className="flex h-[1198px] w-full flex-col items-center bg-[linear-gradient(180deg,#0b4fd3_0%,#0b4fd3_34%,#00205c_92%,#00205b_100%)] font-[Roboto,sans-serif]">
      <header className="flex h-[144px] w-full items-start justify-between pl-10 pr-4">
        <Logo />
        <nav className="mt-5 flex h-[104px] items-center text-[32px] font-medium leading-none text-white">
          <div className="flex gap-8 pr-[34px] pt-0.5 [-webkit-text-stroke:0.5px_currentColor]">
            <a>Home</a>
            <a className="tracking-[-0.2px]">Team</a>
            <a className="tracking-[0.2px] text-[#c785ff]">Worldwide</a>
            <a>Profile</a>
          </div>
          <button className="h-[104px] w-[255px] rounded-[52px] border-4 border-b-[#212121] border-l-[#767676] border-r-[#212121] border-t-[#767676] bg-white pr-0.5 pt-0.5 text-[32px] font-normal tracking-[0.9px] text-[#0d1df0]">
            Logout
          </button>
        </nav>
      </header>
      <main className="ml-[50px] flex w-[1508px] flex-col items-center">
        <h1 className="mt-[150px] h-[82px] text-[40px] font-medium leading-[56px] tracking-[-0.05px] text-white [-webkit-text-stroke:0.6px_#fff]">Datadog Locations</h1>
        <div className="relative h-[640px] w-full overflow-hidden rounded-lg">
          <Terrain />
          <MapControls />
        </div>
      </main>
    </div>
  );
}
